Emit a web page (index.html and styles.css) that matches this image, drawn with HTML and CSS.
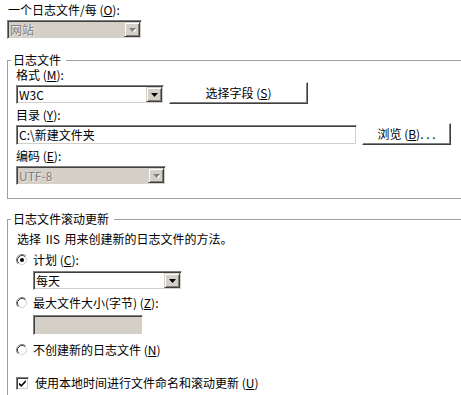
FILE: index.html
```html
<!DOCTYPE html>
<html lang="zh-CN">
<head>
<meta charset="utf-8">
<title>日志文件</title>
<link rel="stylesheet" href="styles.css">
</head>
<body>
<div class="page">
  <div class="lbl top-lbl">一个日志文件/每 (<u>O</u>):</div>
  <div class="combo disabled c-site">
    <span class="val">网站</span>
    <span class="drop"><svg width="7" height="4" viewBox="0 0 7 4"><path d="M0 0H7L3.5 4Z" fill="#808080"/></svg></span>
  </div>

  <fieldset class="group g-file">
    <legend>日志文件</legend>
    <div class="lbl first">格式 (<u>M</u>):</div>
    <div class="row r-format">
      <div class="combo c-format">
        <span class="val">W3C</span>
        <span class="drop"><svg width="7" height="4" viewBox="0 0 7 4"><path d="M0 0H7L3.5 4Z" fill="#000"/></svg></span>
      </div>
      <button class="btn b-fields">选择字段 (<u>S</u>)</button>
    </div>
    <div class="lbl gap4">目录 (<u>Y</u>):</div>
    <div class="row r-dir">
      <div class="edit e-dir">C:\新建文件夹</div>
      <button class="btn b-browse">浏览 (<u>B</u>). . .</button>
    </div>
    <div class="lbl gap4">编码 (<u>E</u>):</div>
    <div class="combo disabled c-enc">
      <span class="val">UTF-8</span>
      <span class="drop"><svg width="7" height="4" viewBox="0 0 7 4"><path d="M0 0H7L3.5 4Z" fill="#808080"/></svg></span>
    </div>
  </fieldset>

  <fieldset class="group g-roll">
    <legend>日志文件滚动更新</legend>
    <div class="lbl desc">选择 IIS 用来创建新的日志文件的方法。</div>
    <div class="opt o-sched">
      <svg class="radio" width="12" height="12" viewBox="0 0 12 12">
        <circle cx="6" cy="6" r="5.5" fill="#fff"/>
        <path d="M2.11 9.89A5.5 5.5 0 0 1 9.89 2.11" stroke="#808080" fill="none"/>
        <path d="M2.82 9.18A4.5 4.5 0 0 1 9.18 2.82" stroke="#404040" fill="none"/>
        <path d="M9.18 2.82A4.5 4.5 0 0 1 2.82 9.18" stroke="#d4d0c8" fill="none"/>
        <circle cx="6" cy="6" r="2" fill="#000"/>
      </svg>
      <span>计划 (<u>C</u>):</span>
    </div>
    <div class="combo c-period">
      <span class="val">每天</span>
      <span class="drop"><svg width="7" height="4" viewBox="0 0 7 4"><path d="M0 0H7L3.5 4Z" fill="#000"/></svg></span>
    </div>
    <div class="opt o-size">
      <svg class="radio" width="12" height="12" viewBox="0 0 12 12">
        <circle cx="6" cy="6" r="5.5" fill="#fff"/>
        <path d="M2.11 9.89A5.5 5.5 0 0 1 9.89 2.11" stroke="#808080" fill="none"/>
        <path d="M2.82 9.18A4.5 4.5 0 0 1 9.18 2.82" stroke="#404040" fill="none"/>
        <path d="M9.18 2.82A4.5 4.5 0 0 1 2.82 9.18" stroke="#d4d0c8" fill="none"/>
      </svg>
      <span>最大文件大小(字节) (<u>Z</u>):</span>
    </div>
    <div class="edit disabled e-size"></div>
    <div class="opt o-none">
      <svg class="radio" width="12" height="12" viewBox="0 0 12 12">
        <circle cx="6" cy="6" r="5.5" fill="#fff"/>
        <path d="M2.11 9.89A5.5 5.5 0 0 1 9.89 2.11" stroke="#808080" fill="none"/>
        <path d="M2.82 9.18A4.5 4.5 0 0 1 9.18 2.82" stroke="#404040" fill="none"/>
        <path d="M9.18 2.82A4.5 4.5 0 0 1 2.82 9.18" stroke="#d4d0c8" fill="none"/>
      </svg>
      <span>不创建新的日志文件 (<u>N</u>)</span>
    </div>
    <div class="opt o-local">
      <span class="check"><svg width="9" height="9" viewBox="0 0 9 9"><path d="M1 3.5L3.2 5.7L7.8 1.1V3.3L3.2 7.9L1 5.7Z" fill="#000"/></svg></span>
      <span>使用本地时间进行文件命名和滚动更新 (<u>U</u>)</span>
    </div>
  </fieldset>
</div>
</body>
</html>
```

FILE: styles.css
```css
html, body {
  margin: 0;
  padding: 0;
  background: #fff;
}
body {
  width: 461px;
  height: 395px;
  overflow: hidden;
  font-family: "Noto Sans CJK SC", "Noto Sans", sans-serif;
  font-size: 12px;
  line-height: 14px;
  color: #000;
}
u {
  text-decoration: underline;
  text-underline-offset: 1px;
}
.page {
  padding-left: 7px;
}
.lbl {
  height: 14px;
  white-space: nowrap;
}
.top-lbl {
  padding-top: 3px;
  padding-left: 1px;
}
.lbl.first { margin-top: 1px; }
.lbl.gap4 { margin-top: 4px; }

/* combo boxes */
.combo {
  box-sizing: border-box;
  display: flex;
  align-items: center;
  height: 19px;
  padding: 1px;
  border: 1px solid;
  border-color: #808080 #fff #fff #808080;
  box-shadow: inset 1px 1px 0 #404040, inset -1px -1px 0 #d4d0c8;
  background: #fff;
}
.combo .val {
  flex: 1;
  padding-left: 1px;
  white-space: nowrap;
}
.combo .drop {
  box-sizing: border-box;
  flex: none;
  width: 16px;
  height: 15px;
  display: flex;
  align-items: center;
  justify-content: center;
  background: #d4d0c8;
  border: 1px solid;
  border-color: #d4d0c8 #404040 #404040 #d4d0c8;
  box-shadow: inset 1px 1px 0 #fff, inset -1px -1px 0 #808080;
}
.combo .drop svg { display: block; margin-top: 1px; }
.combo.disabled { background: #d4d0c8; }
.combo.disabled .val {
  color: #808080;
  text-shadow: 1px 1px 0 rgba(255,255,255,0.6);
}
.combo.disabled .drop svg path { filter: drop-shadow(1px 1px 0 #fff); }

.c-site { width: 135px; margin-top: 3px; }
.c-format { width: 148px; margin-top: 3px; }
.c-enc { width: 150px; margin-top: 3px; }
.c-period { width: 149px; margin-top: 4px; margin-left: 17px; }

/* edits */
.edit {
  box-sizing: border-box;
  height: 20px;
  padding: 2px 2px 0 2px;
  border: 1px solid;
  border-color: #808080 #fff #fff #808080;
  box-shadow: inset 1px 1px 0 #404040, inset -1px -1px 0 #d4d0c8;
  background: #fff;
  white-space: nowrap;
}
.edit.disabled { background: #d4d0c8; }
.e-dir { width: 341px; margin-top: 2px; }
.e-size { width: 110px; margin-top: 5px; margin-left: 17px; }

/* buttons */
.btn {
  box-sizing: border-box;
  height: 22px;
  margin: 0 0 0 5px;
  padding: 0;
  font: inherit;
  line-height: 14px;
  color: #000;
  background: #fff;
  border: 1px solid;
  border-color: #fff #404040 #404040 #fff;
  box-shadow: inset -1px -1px 0 #808080;
  white-space: nowrap;
}
.b-fields { width: 139px; }
.b-browse { width: 89px; }

/* rows */
.row {
  display: flex;
  align-items: flex-start;
  height: 22px;
}
.r-format { margin-top: 0; }
.r-dir { margin-top: 1px; }

/* group boxes */
.group {
  margin: 0 -30px 0 0;
  padding: 0 0 0 8px;
  border: 1px solid #a0a0a0;
  min-width: 0;
}
.group legend {
  margin-left: -5px;
  padding: 0 5px 0 2px;
  line-height: 14px;
  height: 14px;
}
.g-file {
  margin-top: 14px;
  padding-top: 0;
  padding-bottom: 13px;
}
.g-roll {
  margin-top: 13px;
  padding-top: 6px;
  padding-bottom: 30px;
}

.desc { padding-left: 1px; word-spacing: 2px; }

/* options */
.opt {
  display: flex;
  align-items: center;
  height: 14px;
  white-space: nowrap;
}
.radio {
  display: block;
  flex: none;
  margin-right: 5px;
}
.check {
  box-sizing: border-box;
  flex: none;
  width: 13px;
  height: 13px;
  margin-right: 6px;
  display: flex;
  align-items: center;
  justify-content: center;
  background: #fff;
  border: 1px solid;
  border-color: #808080 #fff #fff #808080;
  box-shadow: inset 1px 1px 0 #404040, inset -1px -1px 0 #d4d0c8;
}
.check svg { display: block; }
.o-sched { margin-top: 7px; }
.o-size { margin-top: 6px; }
.o-none { margin-top: 8px; }
.o-local { margin-top: 19px; }
```
